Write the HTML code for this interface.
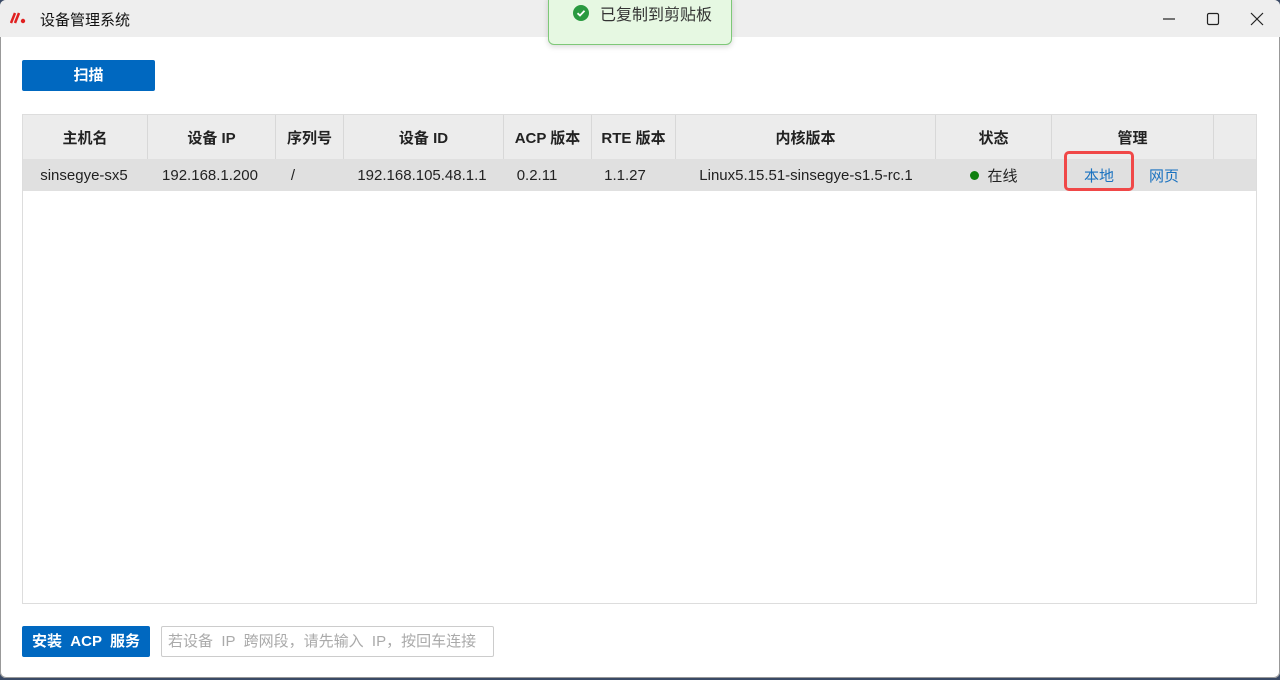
<!DOCTYPE html>
<html><head><meta charset="utf-8"><style>
body{margin:0;width:1280px;height:680px;background:#3a4a66;font-family:"Liberation Sans","Noto Sans CJK SC",sans-serif;overflow:hidden;position:relative}
.win{position:absolute;left:0;top:0;width:1280px;height:678px;background:#fff;border-radius:6px;overflow:hidden;box-shadow:inset 0 0 0 1px #999}
.tb{height:37px;background:#eeeeee;position:relative}
.title{position:absolute;left:40px;top:9px;font-size:15px;color:#111}
.btn{position:absolute;background:#0068c0;color:#fff;font-weight:bold;font-size:15px;text-align:center;border-radius:2px}
.tbl{position:absolute;left:22px;top:114px;width:1233px;height:488px;border:1px solid #ddd;background:#fff}
.hd{position:absolute;left:0;top:0;height:44px;width:1233px;background:#ececec}
.row{position:absolute;left:0;top:44px;height:32px;width:1233px;background:#e0e0e0}
.c{position:absolute;top:0;height:100%;display:flex;align-items:center;justify-content:center;font-size:15px;color:#222}
.hd .c{font-weight:bold;border-right:1px solid #d8d8d8;box-sizing:border-box}
</style></head><body>
<div class="win">
<div class="tb">
<svg style="position:absolute;left:10px;top:12px" width="16" height="12"><path d="M1 11 L5 1 M5 11 L9 1" stroke="#e02020" stroke-width="2.5"/><circle cx="13" cy="9" r="2.2" fill="#e02020"/></svg>
<div class="title">设备管理系统</div>
<svg style="position:absolute;left:1160px;top:12px" width="110" height="14"><path d="M3 7H15" stroke="#222" stroke-width="1.2"/><rect x="47.5" y="1.5" width="11" height="11" rx="1.5" fill="none" stroke="#222" stroke-width="1.2"/><path d="M91 1L103 13M103 1L91 13" stroke="#222" stroke-width="1.2"/></svg>
</div>
<div class="btn" style="left:22px;top:60px;width:133px;height:31px;line-height:31px">扫描</div>
<div class="tbl">
<div class="hd">
<div class="c" style="left:0;width:125px">主机名</div>
<div class="c" style="left:125px;width:128px">设备 IP</div>
<div class="c" style="left:253px;width:68px">序列号</div>
<div class="c" style="left:321px;width:160px">设备 ID</div>
<div class="c" style="left:481px;width:88px">ACP 版本</div>
<div class="c" style="left:569px;width:84px">RTE 版本</div>
<div class="c" style="left:653px;width:260px">内核版本</div>
<div class="c" style="left:913px;width:116px">状态</div>
<div class="c" style="left:1029px;width:162px">管理</div>
</div>
<div class="row">
<div class="c" style="left:0;width:122px">sinsegye-sx5</div>
<div class="c" style="left:125px;width:124px">192.168.1.200</div>
<div class="c" style="left:253px;width:34px">/</div>
<div class="c" style="left:321px;width:156px">192.168.105.48.1.1</div>
<div class="c" style="left:481px;width:66px">0.2.11</div>
<div class="c" style="left:569px;width:66px">1.1.27</div>
<div class="c" style="left:653px;width:260px">Linux5.15.51-sinsegye-s1.5-rc.1</div>
<div class="c" style="left:913px;width:116px"><span style="display:inline-block;width:9px;height:9px;border-radius:50%;background:#108010;margin-right:8px"></span>在线</div>
<div style="position:absolute;left:1041px;top:-8px;width:70px;height:40px;border:3px solid #f04848;border-radius:5px;box-sizing:border-box"></div>
<div class="c" style="left:1043px;width:66px;color:#1a72c0">本地</div>
<div class="c" style="left:1116px;width:50px;color:#1a72c0">网页</div>
</div>
</div>
<div class="btn" style="left:22px;top:626px;width:128px;height:31px;line-height:31px">安装 &nbsp;ACP &nbsp;服务</div>
<div style="position:absolute;left:161px;top:626px;width:325px;height:29px;border:1px solid #ccc;border-radius:2px;font-size:15px;color:#aaa;line-height:29px;padding-left:6px">若设备 &nbsp;IP &nbsp;跨网段，请先输入 &nbsp;IP，按回车连接</div>
</div>
<div style="position:absolute;left:548px;top:-6px;width:182px;height:49px;background:#e6f8e2;border:1px solid #7ec878;border-radius:6px;box-shadow:0 2px 6px rgba(0,0,0,.15)">
<svg style="position:absolute;left:23px;top:9px" width="18" height="18"><circle cx="9" cy="9" r="8" fill="#2a9a40"/><path d="M5.5 9.2L8 11.5L12.5 6.8" stroke="#fff" stroke-width="1.8" fill="none"/></svg>
<div style="position:absolute;left:51px;top:6px;font-size:16px;color:#333">已复制到剪贴板</div>
</div>
</body></html>
